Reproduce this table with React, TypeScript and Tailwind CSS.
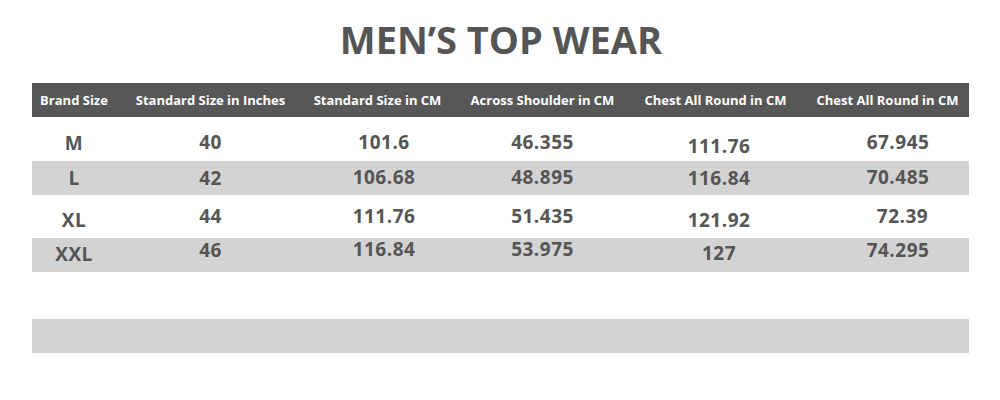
import React from "react";

const headers = [
  { label: "Brand Size", cls: "" },
  { label: "Standard Size in Inches", cls: "" },
  { label: "Standard Size in CM", cls: "" },
  { label: "Across Shoulder in CM", cls: "" },
  { label: "Chest All Round in CM", cls: "" },
  { label: "Chest All Round in CM", cls: "pl-[10px]" },
];

type Cell = { v: string; cls: string };
type Row = { bg: string; h: string; cells: Cell[] };

const rows: Row[] = [
  {
    bg: "bg-white",
    h: "h-[44px]",
    cells: [
      { v: "M", cls: "pt-[17px]" },
      { v: "40", cls: "pt-[16px]" },
      { v: "101.6", cls: "pt-[16px] pl-[13px]" },
      { v: "46.355", cls: "pt-[16px]" },
      { v: "111.76", cls: "pt-[20px] pl-[7px]" },
      { v: "67.945", cls: "pt-[16px] pl-[31px]" },
    ],
  },
  {
    bg: "bg-[#d3d3d3]",
    h: "h-[34px]",
    cells: [
      { v: "L", cls: "pt-[8px]" },
      { v: "42", cls: "pt-[8px]" },
      { v: "106.68", cls: "pt-[7px] pl-[13px]" },
      { v: "48.895", cls: "pt-[7px]" },
      { v: "116.84", cls: "pt-[8px] pl-[7px]" },
      { v: "70.485", cls: "pt-[7px] pl-[31px]" },
    ],
  },
  {
    bg: "bg-white",
    h: "h-[43px]",
    cells: [
      { v: "XL", cls: "pt-[16px]" },
      { v: "44", cls: "pt-[12px]" },
      { v: "111.76", cls: "pt-[12px] pl-[13px]" },
      { v: "51.435", cls: "pt-[12px]" },
      { v: "121.92", cls: "pt-[16px] pl-[7px]" },
      { v: "72.39", cls: "pt-[12px] pl-[40px]" },
    ],
  },
  {
    bg: "bg-[#d3d3d3]",
    h: "h-[34px]",
    cells: [
      { v: "XXL", cls: "pt-[7px]" },
      { v: "46", cls: "pt-[3px]" },
      { v: "116.84", cls: "pt-[2px] pl-[13px]" },
      { v: "53.975", cls: "pt-[2px]" },
      { v: "127", cls: "pt-[6px] pl-[7px]" },
      { v: "74.295", cls: "pt-[3px] pl-[31px]" },
    ],
  },
];

const grid =
  "grid grid-cols-[84px_189px_145px_185px_161px_173px]";

export default function App() {
  return (
    <div
      className="w-[1000px] h-[400px] bg-white overflow-hidden"
      style={{ fontFamily: '"Open Sans", "Liberation Sans", sans-serif' }}
    >
      <div className="h-[83px] pt-[20px] pl-[2px]">
        <h1 className="text-center text-[38px] leading-none font-bold text-[#555555]">
          MEN’S TOP WEAR
        </h1>
      </div>
      <div className="ml-[32px] w-[937px]">
        <div className={`${grid} h-[34px] bg-[#575757] items-center`}>
          {headers.map((h, i) => (
            <div
              key={i}
              className={`text-center text-[13px] font-bold text-white leading-none whitespace-nowrap ${h.cls}`}
            >
              {h.label}
            </div>
          ))}
        </div>
        {rows.map((r, ri) => (
          <div key={ri} className={`${grid} ${r.h} ${r.bg}`}>
            {r.cells.map((c, ci) => (
              <div
                key={ci}
                className={`text-center text-[19px] leading-[19px] font-bold tracking-[0.5px] text-[#555555] ${c.cls}`}
              >
                {c.v}
              </div>
            ))}
          </div>
        ))}
        <div className="h-[47px]" />
        <div className="h-[34px] bg-[#d3d3d3]" />
      </div>
    </div>
  );
}
